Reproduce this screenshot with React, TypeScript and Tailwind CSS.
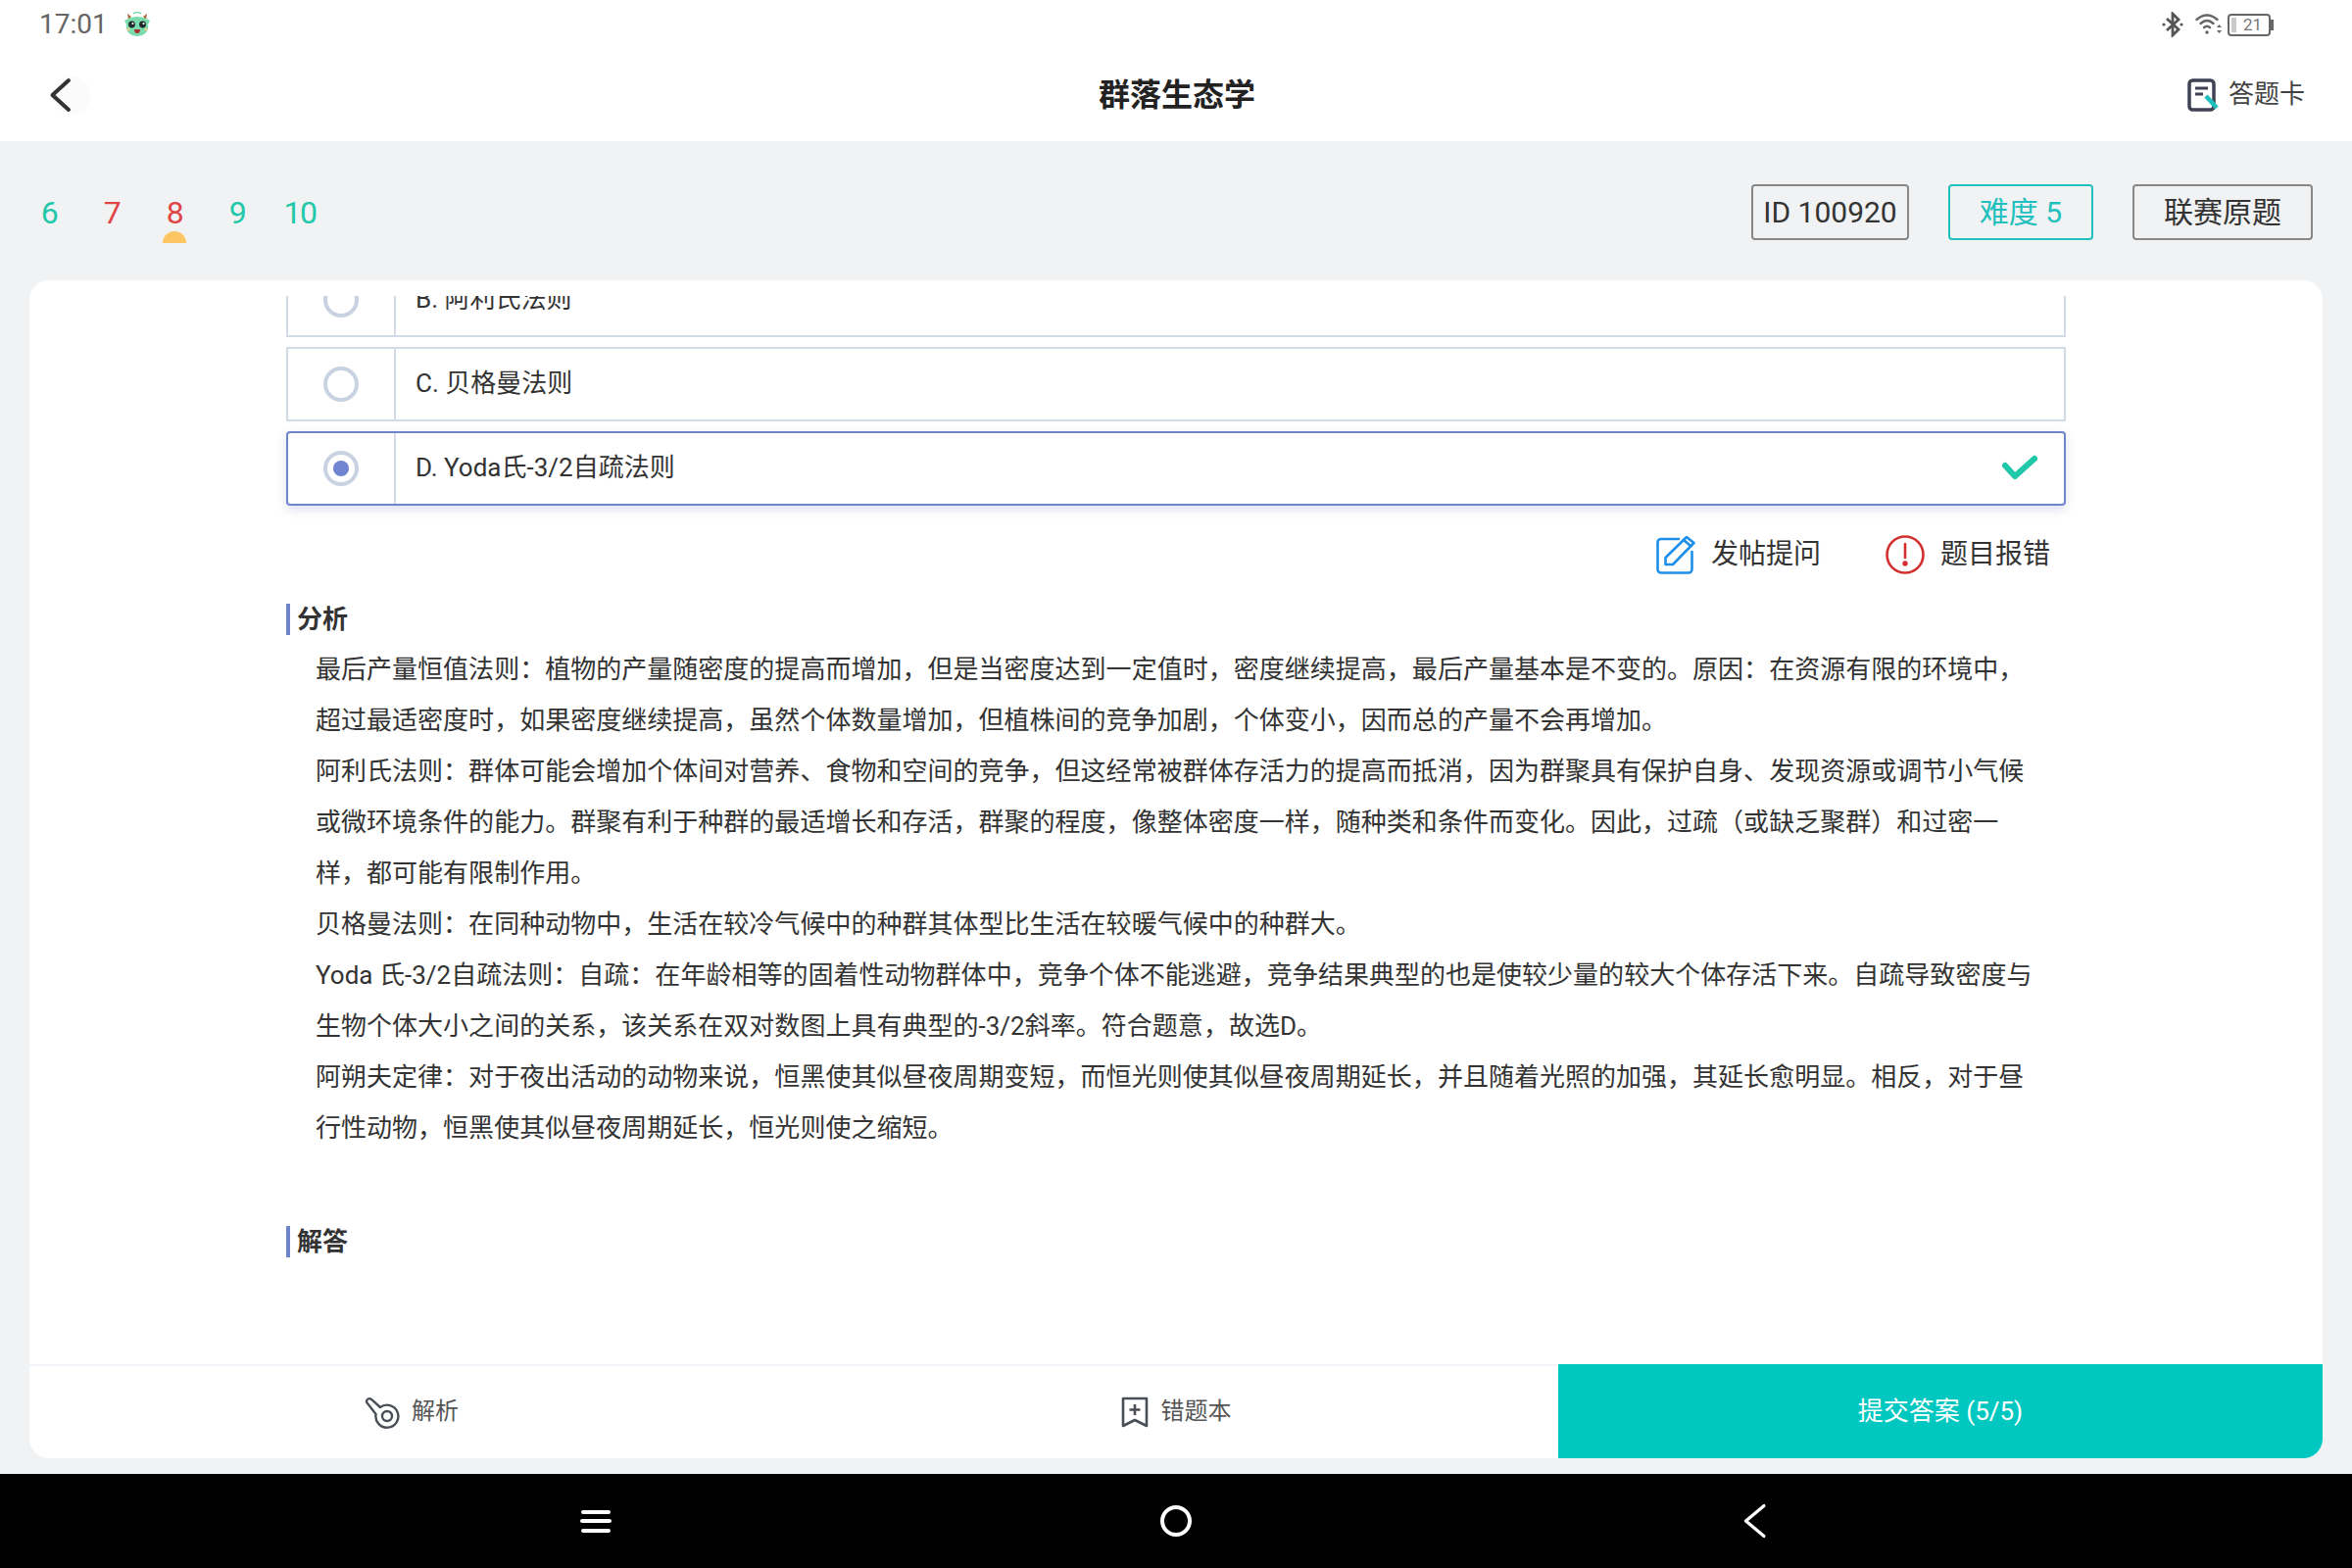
import React from 'react';

const TABS = [
  { n: '6', color: 'text-[#1fc8a8]' },
  { n: '7', color: 'text-[#e04444]' },
  { n: '8', color: 'text-[#e04444]', active: true },
  { n: '9', color: 'text-[#1fc8a8]' },
  { n: '10', color: 'text-[#1fc8a8]' },
];

const ANALYSIS = [
  '最后产量恒值法则：植物的产量随密度的提高而增加，但是当密度达到一定值时，密度继续提高，最后产量基本是不变的。原因：在资源有限的环境中，超过最适密度时，如果密度继续提高，虽然个体数量增加，但植株间的竞争加剧，个体变小，因而总的产量不会再增加。',
  '阿利氏法则：群体可能会增加个体间对营养、食物和空间的竞争，但这经常被群体存活力的提高而抵消，因为群聚具有保护自身、发现资源或调节小气候或微环境条件的能力。群聚有利于种群的最适增长和存活，群聚的程度，像整体密度一样，随种类和条件而变化。因此，过疏（或缺乏聚群）和过密一样，都可能有限制作用。',
  '贝格曼法则：在同种动物中，生活在较冷气候中的种群其体型比生活在较暖气候中的种群大。',
  'Yoda 氏-3/2自疏法则：自疏：在年龄相等的固着性动物群体中，竞争个体不能逃避，竞争结果典型的也是使较少量的较大个体存活下来。自疏导致密度与生物个体大小之间的关系，该关系在双对数图上具有典型的-3/2斜率。符合题意，故选D。',
  '阿朔夫定律：对于夜出活动的动物来说，恒黑使其似昼夜周期变短，而恒光则使其似昼夜周期延长，并且随着光照的加强，其延长愈明显。相反，对于昼行性动物，恒黑使其似昼夜周期延长，恒光则使之缩短。',
];

const Mascot = () => (
  <svg width="32" height="26" viewBox="0 0 32 26">
    <path d="M7 8 L6 2 L10 5 Z M25 8 L26 2 L22 5 Z" fill="#a5673f" />
    <path d="M12 2 q4 -3 8 0" fill="none" stroke="#7adcae" strokeWidth="1.5" />
    <path d="M3 9 L7 7 Q16 3 25 7 L29 9 L27 13 Q28 24 16 25 Q4 24 5 13 Z" fill="#7adcae" />
    <circle cx="10.5" cy="13" r="3.4" fill="#1f2a2a" />
    <circle cx="21.5" cy="13" r="3.4" fill="#1f2a2a" />
    <circle cx="11.5" cy="12" r="1.1" fill="#fff" />
    <circle cx="22.5" cy="12" r="1.1" fill="#fff" />
    <path d="M13 18 h6 q0 4 -3 4 q-3 0 -3 -4 Z" fill="#a83232" />
    <circle cx="7" cy="18" r="1.6" fill="#f2c98a" />
    <circle cx="25" cy="18" r="1.6" fill="#f2c98a" />
  </svg>
);

const StatusIcons = () => (
  <div className="flex items-center gap-[12px]">
    <svg width="22" height="26" viewBox="0 0 22 26" fill="none" stroke="#555" strokeWidth="2.8" strokeLinejoin="miter">
      <path d="M5 7 L17 18 L11 24 V2 L17 8 L5 19" />
      <circle cx="2" cy="13" r="1.6" fill="#555" stroke="none" />
      <circle cx="20" cy="13" r="1.6" fill="#555" stroke="none" />
    </svg>
    <svg width="28" height="24" viewBox="0 0 28 24" fill="none" stroke="#666" strokeWidth="2.4" strokeLinecap="round">
      <path d="M1.5 7 Q12 -2 22.5 7" />
      <path d="M5.5 11 Q12 5 18.5 11" />
      <path d="M9 15 Q12 12.5 15 15" />
      <circle cx="12" cy="20" r="1.8" fill="#666" stroke="none" />
      <path d="M22 15 l2.5 -3 l2.5 3 Z M22 18 l2.5 3 l2.5 -3 Z" fill="#666" stroke="none" />
    </svg>
    <div className="-ml-[7px] flex items-center">
      <div className="flex h-[23px] w-[44px] items-center rounded-[4px] border-2 border-[#666] px-[2px]">
        <div className="h-[15px] w-[5px] bg-[#c9c9c9]" />
        <span className="ml-[7px] text-[17px] leading-none text-[#777]">21</span>
      </div>
      <div className="h-[11px] w-[3px] bg-[#666]" />
    </div>
  </div>
);

const Radio = ({ checked }: { checked?: boolean }) => (
  <div className="flex h-[36px] w-[36px] items-center justify-center rounded-full border-[4px] border-[#c9d2e0] bg-white">
    {checked && <div className="h-[16px] w-[16px] rounded-full bg-[#7085d0]" />}
  </div>
);

const Option = ({ label, checked, className = '' }: { label: string; checked?: boolean; className?: string }) => (
  <div
    className={`flex h-[76px] shrink-0 items-stretch border-2 ${
      checked
        ? 'rounded-[4px] border-[#7085c9] shadow-[0_4px_10px_rgba(112,133,201,0.25)]'
        : 'border-[#d3dbe8]'
    } ${className}`}
  >
    <div className="flex w-[110px] items-center justify-center border-r-2 border-[#d3dbe8]">
      <Radio checked={checked} />
    </div>
    <div className="flex flex-1 items-center justify-between pl-[20px] pr-[27px] text-[26px] text-[#333]">
      <span className="pb-[2px]">{label}</span>
      {checked && (
        <svg width="36" height="28" viewBox="0 0 36 28" fill="none" stroke="#1fc8a8" strokeWidth="6" strokeLinecap="round" strokeLinejoin="round">
          <path d="M3 11 L13 22 L33 4" />
        </svg>
      )}
    </div>
  </div>
);

const SectionTitle = ({ children }: { children: React.ReactNode }) => (
  <div className="flex h-[32px] items-center border-l-[4px] border-[#7085c9] pl-[7px] text-[26px] font-bold text-[#333]">
    {children}
  </div>
);

export default function App() {
  return (
    <div className="flex h-[1600px] w-[2400px] flex-col overflow-hidden bg-[#f1f2f4] [font-family:Roboto,'Noto_Sans_CJK_SC',sans-serif]">
      {/* status bar */}
      <div className="flex h-[48px] items-center justify-between bg-white pl-[40px] pr-[80px] pt-[2px]">
        <div className="flex items-center gap-[14px]">
          <span className="text-[28px] leading-none text-[#666]">17:01</span>
          <Mascot />
        </div>
        <StatusIcons />
      </div>

      {/* header */}
      <div className="flex h-[96px] items-center justify-between bg-white pt-[1px]">
        <div className="flex-1 pl-[50px]">
          <svg width="44" height="40" viewBox="0 0 44 40" fill="none">
            <circle cx="23" cy="20" r="19" fill="#fbfbfb" />
            <path d="M20 5 L3.5 20 L20 35" stroke="#333" strokeWidth="4" strokeLinecap="round" strokeLinejoin="round" />
          </svg>
        </div>
        <div className="text-[32px] font-bold text-[#222]">群落生态学</div>
        <div className="flex flex-1 items-center justify-end gap-[10px] pr-[48px]">
          <svg width="32" height="34" viewBox="0 0 32 34" fill="none">
            <rect x="2" y="2" width="25" height="30" rx="3.5" stroke="#3f4254" strokeWidth="3.5" />
            <path d="M8 10 H21 M8 16 H16" stroke="#3f4254" strokeWidth="3" />
            <path d="M19 18 L30 30" stroke="#1fc0bd" strokeWidth="4.5" />
          </svg>
          <span className="text-[26px] text-[#444]">答题卡</span>
        </div>
      </div>

      {/* tabs and tags */}
      <div className="flex h-[142px] shrink-0 items-center justify-between pl-[18px] pr-[40px]">
        <div className="flex pt-[3px]">
          {TABS.map((t) => (
            <div key={t.n} className={`relative w-[64px] text-center text-[32px] leading-none tracking-[-1.5px] ${t.color}`}>
              {t.n}
              {t.active && (
                <div className="absolute left-[20px] top-[35px] h-[12px] w-[24px] rounded-t-full bg-[#fdc663]" />
              )}
            </div>
          ))}
        </div>
        <div className="flex items-center gap-[40px] pt-[3px] text-[30px]">
          <div className="flex h-[57px] w-[161px] items-center justify-center rounded-[4px] border-2 border-[#888] text-[#333]">ID 100920</div>
          <div className="flex h-[57px] w-[148px] items-center justify-center rounded-[4px] border-2 border-[#1fc0bd] text-[#1fc0bd]">难度 5</div>
          <div className="flex h-[57px] w-[184px] items-center justify-center rounded-[4px] border-2 border-[#888] text-[#333]">联赛原题</div>
        </div>
      </div>

      {/* card */}
      <div className="mx-[30px] flex h-[1202px] shrink-0 flex-col overflow-hidden rounded-[20px] bg-white">
        <div className="flex-1 pt-[16px]">
          <div className="h-[1090px] overflow-hidden px-[262px]">
            <div className="flex flex-col gap-[10px]">
              <Option label="B. 阿利氏法则" className="-mt-[34px]" />
              <Option label="C. 贝格曼法则" />
              <Option label="D. Yoda氏-3/2自疏法则" checked />
            </div>

            <div className="mt-[29px] flex items-center justify-end gap-[66px] pr-[16px] text-[28px] text-[#333]">
              <div className="flex items-center gap-[16px]">
                <svg width="40" height="40" viewBox="0 0 40 40" fill="none" stroke="#1e8fe8" strokeWidth="2.6" strokeLinejoin="round" strokeLinecap="round">
                  <path d="M23 4 H5 a3.5 3.5 0 0 0 -3.5 3.5 V35 a3.5 3.5 0 0 0 3.5 3.5 H33 a3.5 3.5 0 0 0 3.5 -3.5 V17" />
                  <path d="M9.5 30 V23 L31 2 L38.5 8 L17 30 Z" />
                  <path d="M28 5 L35 11" />
                </svg>
                <span>发帖提问</span>
              </div>
              <div className="flex items-center gap-[16px]">
                <svg width="40" height="40" viewBox="0 0 40 40" fill="none" stroke="#d32f2f" strokeWidth="2.6" strokeLinecap="round">
                  <circle cx="20" cy="20" r="18.5" />
                  <path d="M20 9 V23" />
                  <circle cx="20" cy="29" r="1.4" fill="#d32f2f" />
                </svg>
                <span>题目报错</span>
              </div>
            </div>

            <div className="mt-[29px]">
              <SectionTitle>分析</SectionTitle>
            </div>
            <div className="ml-[30px] mt-[9px] w-[1765px] text-[26px] leading-[52px] tracking-[0.02px] text-[#333]">
              {ANALYSIS.map((p) => (
                <p key={p}>{p}</p>
              ))}
            </div>

            <div className="mt-[74px]">
              <SectionTitle>解答</SectionTitle>
            </div>
          </div>
        </div>

        {/* bottom actions */}
        <div className="grid h-[96px] shrink-0 grid-cols-3 text-[24px] text-[#555]">
          <div className="flex items-center justify-center gap-[12px] border-t-2 border-[#f2f4f9]">
            <svg width="36" height="36" viewBox="0 0 36 36" fill="none" stroke="#4a4f57" strokeWidth="2.4" strokeLinecap="round">
              <path d="M16 13 A11.5 11.5 0 1 1 11.6 20 L3 9 a2.6 2.6 0 0 1 4 -4 L16 13" />
              <circle cx="23" cy="22" r="5" />
            </svg>
            <span className="pb-[2px]">解析</span>
          </div>
          <div className="flex items-center justify-center gap-[13px] border-t-2 border-[#f2f4f9]">
            <svg width="28" height="32" viewBox="0 0 28 32" fill="none" stroke="#4a4f57" strokeWidth="2.6" strokeLinejoin="round">
              <path d="M2 2 H26 V30 L14 24 L2 30 Z" />
              <path d="M14 8 V19 M8.5 13.5 H19.5" />
            </svg>
            <span className="pb-[2px]">错题本</span>
          </div>
          <div className="flex items-center justify-center bg-[#00c7c0] text-[26px] text-white">提交答案 (5/5)</div>
        </div>
      </div>

      {/* android nav */}
      <div className="mt-[16px] flex h-[96px] shrink-0 items-center justify-center gap-[552px] bg-black">
        <svg width="40" height="32" viewBox="0 0 40 32" fill="#fff">
          <rect x="5" y="5" width="30" height="4" rx="2" />
          <rect x="4" y="14" width="32" height="4" rx="2" />
          <rect x="5" y="24" width="30" height="4" rx="2" />
        </svg>
        <svg width="40" height="40" viewBox="0 0 40 40" fill="none" stroke="#fff" strokeWidth="4">
          <circle cx="20" cy="20" r="14" />
        </svg>
        <svg width="40" height="40" viewBox="0 0 40 40" fill="none" stroke="#fff" strokeWidth="3.2" strokeLinecap="round" strokeLinejoin="round">
          <path d="M28 4.5 L9.5 20 L28 35.5" />
        </svg>
      </div>
    </div>
  );
}
